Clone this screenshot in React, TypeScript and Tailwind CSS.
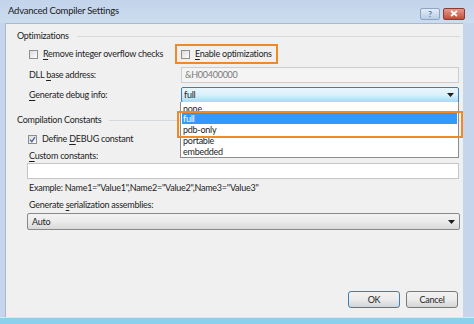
import React from "react";

const font = { fontFamily: 'Lato, "Open Sans", Arial, sans-serif' };

function CheckBox({ checked = false }: { checked?: boolean }) {
  return (
    <span className="relative flex h-[9px] w-[9px] shrink-0 items-center justify-center border border-[#8e8f8f] bg-gradient-to-br from-[#dcdcdc] to-[#fbfbfb]">
      {checked && (
        <svg width="7" height="7" viewBox="0 0 7 7" className="absolute">
          <path d="M1 3.6 L2.8 5.6 L6 1.2" fill="none" stroke="#4a5f97" strokeWidth="1.3" />
        </svg>
      )}
    </span>
  );
}

function GroupHeader({ label }: { label: string }) {
  return (
    <div className="flex h-[16px] items-center pl-[11px] pr-[3px]">
      <span className="text-[#1e1e1e]">{label}</span>
      <div className="ml-[8px] h-px flex-1 bg-[#d5dadf]" />
    </div>
  );
}

function Arrow() {
  return (
    <svg width="7" height="4" viewBox="0 0 7 4">
      <path d="M0 0 H7 L3.5 4 Z" fill="#1e1e1e" />
    </svg>
  );
}

function U({ children }: { children: React.ReactNode }) {
  return <span className="underline decoration-[0.5px] underline-offset-[1.5px]">{children}</span>;
}

export default function App() {
  return (
    <div
      className="relative flex h-[324px] w-[474px] flex-col overflow-hidden whitespace-nowrap bg-[#c4d5ec] text-[9px] tracking-[-0.25px] text-[#1e1e1e]"
      style={font}
    >
      {/* title bar */}
      <div className="flex h-[23px] items-center bg-gradient-to-b from-[#c2d4eb] to-[#cddcef] pl-[8px] pr-[9px]">
        <span className="text-[9.5px] text-[#1a1a1a]">Advanced Compiler Settings</span>
        <div className="ml-auto mt-[4px] flex gap-[3px]">
          <div className="flex h-[12px] w-[20px] items-center justify-center rounded-[2px] border border-[#8ea4c1] bg-gradient-to-b from-[#e3ecf7] to-[#b9cde5] text-[8px] font-bold leading-none text-[#5b7394]">
            ?
          </div>
          <div className="flex h-[12px] w-[22px] items-center justify-center rounded-[2px] border border-[#8d3a33] bg-gradient-to-b from-[#e39a8d] to-[#c4493b]">
            <svg width="8" height="7" viewBox="0 0 8 7">
              <path d="M1 1 L7 6 M7 1 L1 6" stroke="#ffffff" strokeWidth="1.8" />
            </svg>
          </div>
        </div>
      </div>

      {/* client */}
      <div className="ml-[5px] mr-[11px] flex flex-1 flex-col border-l border-t border-[#a9b8cc] bg-[#f0f0f0]">
        <div className="mt-[4px]">
          <GroupHeader label="Optimizations" />
        </div>

        <div className="flex h-[20px] items-center">
          <div className="flex w-[169px] items-center pl-[23px]">
            <CheckBox />
            <span className="ml-[5px]">
              <U>R</U>emove integer overflow checks
            </span>
          </div>
          <div className="flex h-[20px] w-[103px] items-center border-2 border-[#f08a24] pl-[4px]">
            <CheckBox />
            <span className="ml-[5px]">
              <U>E</U>nable optimizations
            </span>
          </div>
        </div>

        <div className="mt-[3px] flex h-[16px] items-center pl-[23px] pr-[4px]">
          <span className="w-[152px]">
            DLL <U>b</U>ase address:
          </span>
          <div className="flex h-[16px] flex-1 items-center border border-[#cdcdcd] bg-[#f4f4f4] pl-[3px] text-[#7a7a7a]">
            &amp;H00400000
          </div>
        </div>

        <div className="mt-[4px] flex h-[16px] items-center pl-[23px] pr-[4px]">
          <span className="w-[152px]">
            <U>G</U>enerate debug info:
          </span>
          <div className="flex h-[16px] flex-1 items-center rounded-[2px] border border-[#3c7fb1] bg-gradient-to-b from-[#eaf6fd] via-[#d9f0fc] to-[#a7d9f5] pl-[2px] pr-[4px]">
            <span>full</span>
            <span className="ml-auto">
              <Arrow />
            </span>
          </div>
        </div>

        <div className="mt-[9px]">
          <GroupHeader label="Compilation Constants" />
        </div>

        <div className="mt-[4px] flex h-[14px] items-center pl-[22px]">
          <CheckBox checked />
          <span className="ml-[5px]">
            Define <U>D</U>EBUG constant
          </span>
        </div>

        <div className="mt-[3px] flex h-[14px] items-center pl-[23px]">
          <span>
            <U>C</U>ustom constants:
          </span>
        </div>

        <div className="ml-[21px] mr-[4px] h-[16px] border border-[#c5c5c5] bg-white" />

        <div className="mt-[2px] flex h-[14px] items-center pl-[23px]">
          Example: Name1="Value1",Name2="Value2",Name3="Value3"
        </div>

        <div className="mt-[3px] flex h-[14px] items-center pl-[23px]">
          <span>
            Generate <U>s</U>erialization assemblies:
          </span>
        </div>

        <div className="ml-[21px] mr-[3px] mt-[1px] flex h-[17px] items-center rounded-[2px] border border-[#8a8a8a] bg-gradient-to-b from-[#f3f3f3] via-[#ebebeb] to-[#d8d8d8] pl-[4px] pr-[4px]">
          <span>Auto</span>
          <span className="ml-auto">
            <Arrow />
          </span>
        </div>

        <div className="mt-auto mb-[9px] flex justify-end gap-[6px] pr-[5px]">
          <button className="flex h-[17px] w-[52px] items-center justify-center rounded-[3px] border border-[#3c7fb1] bg-gradient-to-b from-[#f2f2f2] via-[#ebebeb] to-[#d5d5d5]">
            OK
          </button>
          <button className="flex h-[17px] w-[52px] items-center justify-center rounded-[3px] border border-[#7a7a7a] bg-gradient-to-b from-[#f2f2f2] via-[#ebebeb] to-[#d5d5d5]">
            Cancel
          </button>
        </div>
      </div>

      {/* bottom frame */}
      <div className="h-[7px] border-t border-[#dbe5f3] bg-[#8bd1ee]" />

      {/* open dropdown list overlay */}
      <div className="absolute left-[180px] top-[102px] flex h-[56px] w-[279px] flex-col overflow-hidden border-x border-b border-[#8d8d8d] bg-white">
        <div className="flex h-[11px] shrink-0 items-center pl-[2px] pt-[2px] leading-none">none</div>
        <div className="mx-[1px] flex h-[11px] shrink-0 items-center bg-[#3399ff] pl-[1px] leading-none text-white">full</div>
        <div className="flex h-[11px] shrink-0 items-center pl-[2px] leading-none">pdb-only</div>
        <div className="flex h-[11px] shrink-0 items-center pl-[2px] leading-none">portable</div>
        <div className="flex h-[11px] shrink-0 items-center pl-[2px] leading-none">embedded</div>
      </div>

      {/* annotation around highlighted items */}
      <div className="absolute left-[177px] top-[111px] h-[27px] w-[286px] border-2 border-[#f08a24]" />
    </div>
  );
}
